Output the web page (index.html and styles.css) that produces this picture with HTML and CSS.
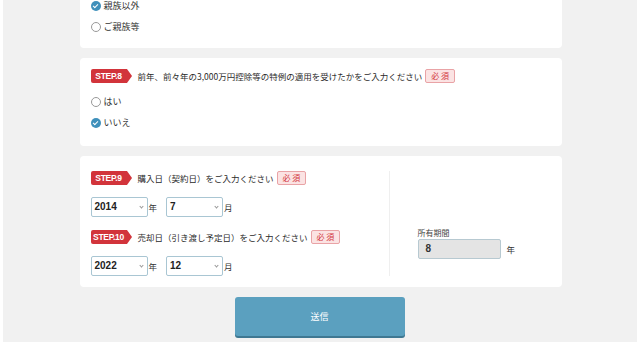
FILE: index.html
```html
<!DOCTYPE html>
<html lang="ja">
<head>
    <meta charset="UTF-8">
    <meta name="viewport" content="width=device-width, initial-scale=1.0">
    <title>譲渡所得シミュレーション</title>
    <link rel="stylesheet" href="styles.css">
</head>
<body>
    <div class="page">
        <div class="wrap">
            <!-- 売却先 -->
            <div class="card card-top">
                <label class="radio checked"><span class="mark"></span>親族以外</label>
                <label class="radio"><span class="mark"></span>ご親族等</label>
            </div>

            <!-- STEP.8 -->
            <div class="card">
                <div class="step-head">
                    <span class="step">STEP.8</span>
                    <span class="q">前年、前々年の3,000万円控除等の特例の適用を受けたかをご入力ください</span>
                    <span class="req">必 須</span>
                </div>
                <label class="radio"><span class="mark"></span>はい</label>
                <label class="radio checked"><span class="mark"></span>いいえ</label>
            </div>

            <!-- STEP.9 / STEP.10 -->
            <div class="card card-dates">
                <div class="dates">
                    <div class="step-head">
                        <span class="step">STEP.9</span>
                        <span class="q">購入日（契約日）をご入力ください</span>
                        <span class="req">必 須</span>
                    </div>
                    <div class="ym">
                        <div class="sel">2014</div><span class="unit">年</span>
                        <div class="sel">7</div><span class="unit">月</span>
                    </div>
                    <div class="step-head">
                        <span class="step">STEP.10</span>
                        <span class="q">売却日（引き渡し予定日）をご入力ください</span>
                        <span class="req">必 須</span>
                    </div>
                    <div class="ym">
                        <div class="sel">2022</div><span class="unit">年</span>
                        <div class="sel">12</div><span class="unit">月</span>
                    </div>
                </div>
                <div class="period">
                    <div class="period-label">所有期間</div>
                    <div class="period-row">
                        <div class="period-box">8</div><span class="unit">年</span>
                    </div>
                </div>
            </div>

            <div class="submit-row">
                <button class="submit">送信</button>
            </div>
        </div>
    </div>
</body>
</html>
```

FILE: styles.css
```css
body {
    margin: 0;
    background: #fff;
    font-family: "Noto Sans CJK JP", "Noto Sans", sans-serif;
    color: #333;
    font-size: 9px;
}

.page {
    margin: 0 3px;
    background: #f1f1f1;
    height: 342px;
    overflow: hidden;
}

.wrap {
    width: 482px;
    margin: 0 auto;
    padding-left: 1px;
}

.card {
    background: #fff;
    border-radius: 4px;
    padding: 11px 11px 13px;
    margin-bottom: 10px;
}

.card-top {
    padding-top: 0;
    padding-bottom: 11px;
    margin-top: -5px;
}

.radio {
    display: flex;
    align-items: center;
    height: 21px;
    line-height: 1;
}

.mark {
    width: 10px;
    height: 10px;
    border: 1px solid #999;
    border-radius: 50%;
    margin-right: 3px;
    box-sizing: border-box;
    position: relative;
    background: #fff;
}

.radio.checked .mark {
    border: none;
    background: #3f90bb;
}

/* チェックマーク */
.radio.checked .mark::after {
    content: '';
    position: absolute;
    left: 3px;
    top: 2px;
    width: 2px;
    height: 4px;
    border: solid #fff;
    border-width: 0 1.5px 1.5px 0;
    transform: rotate(45deg);
}

.step-head {
    display: flex;
    align-items: center;
    height: 14px;
    margin-bottom: 8px;
}

.step {
    position: relative;
    width: 36px;
    text-align: center;
    background: #d2343b;
    color: #fff;
    font-family: "Liberation Sans", Arial, sans-serif;
    font-weight: bold;
    font-size: 8.5px;
    letter-spacing: -0.3px;
    height: 14px;
    line-height: 14px;
    border-radius: 2px 0 0 2px;
    margin-right: 11px;
}

.step::after {
    content: '';
    position: absolute;
    right: -5px;
    top: 0;
    border-left: 5px solid #d2343b;
    border-top: 7px solid transparent;
    border-bottom: 7px solid transparent;
}

.q {
    color: #2a2a2a;
    font-size: 8.5px;
}

.req {
    margin-left: 3px;
    background: #fbe3e3;
    border: 1px solid #e9a3a6;
    color: #d2343b;
    font-size: 8px;
    height: 12px;
    line-height: 12px;
    padding: 0 5px;
    border-radius: 2px;
}

.card-dates {
    display: flex;
    padding-top: 15px;
    padding-bottom: 7px;
}

.dates {
    width: 298px;
    border-right: 1px solid #efefef;
    margin-bottom: 4px;
}

.ym {
    display: flex;
    align-items: center;
    margin-top: 12px;
    margin-bottom: 13px;
}

.ym:last-child {
    margin-bottom: 0;
}

.sel {
    position: relative;
    width: 57px;
    height: 20px;
    box-sizing: border-box;
    border: 1px solid #a9c6d3;
    border-radius: 2px;
    font-family: "Liberation Sans", Arial, sans-serif;
    font-weight: bold;
    font-size: 10px;
    line-height: 18px;
    padding-left: 3px;
    color: #222;
}

.sel::after {
    content: '';
    position: absolute;
    right: 4px;
    top: 7px;
    width: 2px;
    height: 2px;
    border: solid #999;
    border-width: 0 1px 1px 0;
    transform: rotate(45deg);
}

.unit {
    font-size: 8.5px;
    margin-left: 1px;
    margin-right: 9px;
}

.period {
    padding-left: 28px;
    padding-top: 56px;
}

.period-label {
    font-size: 8px;
    color: #444;
    margin-bottom: 1px;
}

.period-row {
    display: flex;
    align-items: center;
}

.period-box {
    width: 83px;
    height: 20px;
    box-sizing: border-box;
    background: #e4e4e4;
    border: 1px solid #b7c9d1;
    border-radius: 2px;
    font-family: "Liberation Sans", Arial, sans-serif;
    font-weight: bold;
    font-size: 10px;
    line-height: 18px;
    padding-left: 7px;
}

.period-row .unit {
    margin-left: 6px;
}

.submit-row {
    display: flex;
    justify-content: center;
}

.submit {
    width: 170px;
    height: 39px;
    border: none;
    border-radius: 3px;
    background: #5ba0bf;
    box-shadow: 0 2px 0 #3f7892;
    color: #fff;
    font-family: "Noto Sans CJK JP", sans-serif;
    font-size: 9px;
    margin-left: -2px;
}
```
